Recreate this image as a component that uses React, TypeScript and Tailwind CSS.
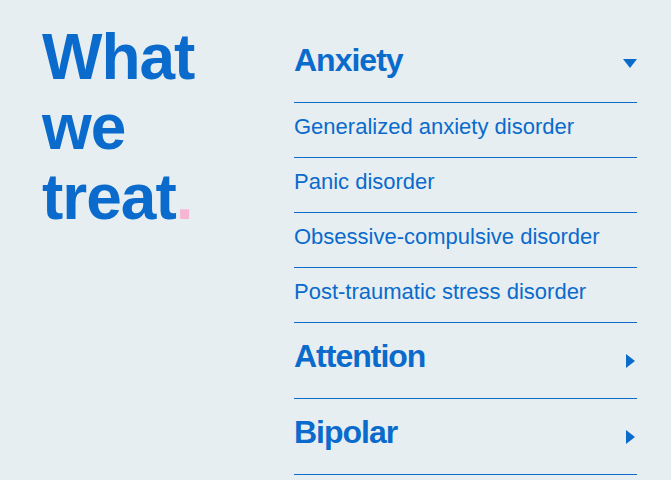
import React from 'react';

const subItems = [
  'Generalized anxiety disorder',
  'Panic disorder',
  'Obsessive-compulsive disorder',
  'Post-traumatic stress disorder',
];

function DownTriangle() {
  return (
    <svg width="14" height="9" viewBox="0 0 14 9" className="mt-[15px]">
      <path d="M0 0 L14 0 L7 9 Z" fill="#0a6bcc" />
    </svg>
  );
}

function RightTriangle() {
  return (
    <div className="mt-[14px] flex w-[14px] justify-center">
      <svg width="9" height="14" viewBox="0 0 9 14">
        <path d="M0 0 L9 7 L0 14 Z" fill="#0a6bcc" />
      </svg>
    </div>
  );
}

function CategoryRow({ title, open }: { title: string; open?: boolean }) {
  return (
    <div className="flex h-[76px] items-start justify-between border-b border-[#0a6bcc] pt-[17px]">
      <span className="text-[32px] font-bold leading-[32px] tracking-[-1px]">{title}</span>
      {open ? <DownTriangle /> : <RightTriangle />}
    </div>
  );
}

export default function App() {
  return (
    <div
      className="flex h-[480px] w-[671px] overflow-hidden bg-[#e6eef2] pl-[42px] text-[#0a6bcc]"
      style={{ fontFamily: '"Liberation Sans", Arial, sans-serif' }}
    >
      <div className="w-[252px] pt-[22px]">
        <h1 className="text-[64px] font-bold leading-[70px] tracking-[-1px]">
          What
          <br />
          we
          <br />
          treat<span className="text-[#f6b6d1]">.</span>
        </h1>
      </div>

      <div className="w-[343px] pt-[27px]">
        <CategoryRow title="Anxiety" open />
        {subItems.map((item) => (
          <div key={item} className="h-[55px] border-b border-[#0a6bcc] pt-[13px] text-[22px] leading-[22px]">
            {item}
          </div>
        ))}
        <CategoryRow title="Attention" />
        <CategoryRow title="Bipolar" />
      </div>
    </div>
  );
}
